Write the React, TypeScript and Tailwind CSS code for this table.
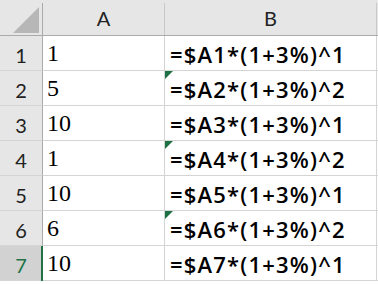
import React from 'react'

const rows = [
  { a: '1', b: '=$A1*(1+3%)^1', flag: false },
  { a: '5', b: '=$A2*(1+3%)^2', flag: true },
  { a: '10', b: '=$A3*(1+3%)^1', flag: false },
  { a: '1', b: '=$A4*(1+3%)^2', flag: true },
  { a: '10', b: '=$A5*(1+3%)^1', flag: false },
  { a: '6', b: '=$A6*(1+3%)^2', flag: true },
  { a: '10', b: '=$A7*(1+3%)^1', flag: false },
]

const sans = "font-['Lato','Open_Sans',sans-serif]"

export default function App() {
  return (
    <div className="w-[378px] h-[284px] overflow-hidden bg-white">
      {/* column headers */}
      <div className="flex h-[36px] bg-[#e6e6e6] border-b border-[#ababab]">
        <div className="w-[43px] pt-[3px] flex">
          <div className="flex-1 border-r border-[#ababab] relative">
            <svg className="absolute left-[13px] top-[4px]" width="27" height="27" viewBox="0 0 27 27">
              <polygon points="0,26 26,26 26,0" fill="#b7b7b7" />
            </svg>
          </div>
        </div>
        <div className={`w-[122px] pt-[3px] flex ${sans}`}>
          <div className="flex-1 border-r border-[#c8c8c8] flex items-center justify-center text-[20px] text-[#222] leading-none pb-[2px]">A</div>
        </div>
        <div className={`w-[212px] pt-[3px] flex ${sans}`}>
          <div className="flex-1 border-r border-[#c8c8c8] flex items-center justify-center text-[20px] text-[#222] leading-none pb-[2px]">B</div>
        </div>
        <div className="flex-1" />
      </div>

      {/* body rows */}
      {rows.map((r, i) => {
        const selected = i === rows.length - 1
        return (
          <div key={i} className="flex h-[35px]">
            <div
              className={`w-[43px] flex items-end justify-center pb-[5px] border-r border-b border-r-[#ababab] border-b-[#d4d4d4] text-[20px] leading-none ${sans} ${
                selected ? 'bg-[#d2d2d2] text-[#217346]' : 'bg-[#e6e6e6] text-[#222]'
              }`}
            >
              {i + 1}
            </div>
            <div
              className={`w-[122px] relative flex items-end pl-[4px] pb-[5px] border-r border-b border-[#d4d4d4] font-['Liberation_Serif',serif] text-[24px] leading-none text-black`}
            >
              {selected && <div className="absolute left-[-2px] top-0 bottom-[-1px] w-[2px] bg-[#217346]" />}
              {r.a}
            </div>
            <div
              className="w-[212px] relative flex items-end pl-[5px] pb-[5px] border-r border-b border-[#d4d4d4] font-['Open_Sans',sans-serif] font-semibold text-[22px] tracking-[1.2px] leading-none text-black whitespace-nowrap"
            >
              {r.flag && (
                <div className="absolute left-0 top-0 w-0 h-0 border-t-[8px] border-r-[8px] border-t-[#1e7145] border-r-transparent" />
              )}
              {r.b}
            </div>
            <div className="flex-1 border-b border-[#d4d4d4]" />
          </div>
        )
      })}
    </div>
  )
}
